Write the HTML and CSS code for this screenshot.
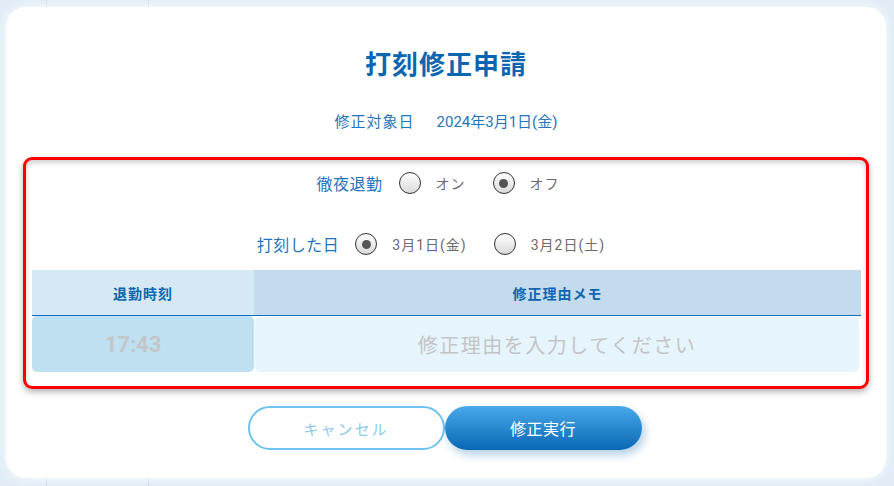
FILE: index.html
```html
<!DOCTYPE html>
<html lang="ja">
<head>
    <meta charset="UTF-8">
    <meta name="viewport" content="width=device-width, initial-scale=1.0">
    <title>打刻修正申請</title>
    <link rel="stylesheet" href="styles.css">
</head>
<body>
    <div class="modal">
        <h1 class="title">打刻修正申請</h1>
        <div class="target">
            <span class="target-label">修正対象日</span>
            <span class="target-date">2024年3月1日(金)</span>
        </div>

        <div class="edit-box">
            <div class="field-row row-night">
                <span class="field-label">徹夜退勤</span>
                <label class="option">
                    <span class="radio"></span>
                    <span class="option-text">オン</span>
                </label>
                <label class="option">
                    <span class="radio checked"></span>
                    <span class="option-text">オフ</span>
                </label>
            </div>
            <div class="field-row row-day">
                <span class="field-label">打刻した日</span>
                <label class="option">
                    <span class="radio checked"></span>
                    <span class="option-text">3月1日(金)</span>
                </label>
                <label class="option">
                    <span class="radio"></span>
                    <span class="option-text">3月2日(土)</span>
                </label>
            </div>

            <div class="edit-table">
                <div class="th th-time">退勤時刻</div>
                <div class="th th-memo">修正理由メモ</div>
                <div class="td td-time">17:43</div>
                <div class="td td-memo">修正理由を入力してください</div>
            </div>
        </div>

        <div class="actions">
            <button class="btn btn-cancel">キャンセル</button>
            <button class="btn btn-submit">修正実行</button>
        </div>
    </div>
</body>
</html>
```

FILE: styles.css
```css
body {
    margin: 0;
    height: 486px;
    padding: 7px 8px 0 6px;
    box-sizing: border-box;
    overflow: hidden;
    font-family: Roboto, "Noto Sans CJK JP", sans-serif;
    background-color: #e1ecf6;
    background-image: linear-gradient(90deg, transparent 46px, #c7dcef 46px, #c7dcef 47px, transparent 47px, transparent 148px, #c7dcef 148px, #c7dcef 149px, transparent 149px);
}
.modal {
    width: 880px;
    height: 471px;
    box-sizing: border-box;
    padding: 40px 17px 0;
    background: #ffffff;
    border-radius: 20px;
    box-shadow: 0 0 12px rgba(255, 255, 255, 0.9);
}
.title {
    margin: 0;
    text-align: center;
    font-size: 26px;
    line-height: 36px;
    letter-spacing: 1px;
    font-weight: bold;
    color: #0b66b0;
}
.target {
    margin-top: 28px;
    display: flex;
    justify-content: center;
    gap: 22px;
    font-size: 15px;
    line-height: 22px;
    color: #1f74bb;
}
.target-label {
    letter-spacing: 1px;
}
.edit-box {
    margin-top: 24px;
    border: 3px solid #ff0000;
    border-radius: 9px;
    padding: 8px 5px 14px 6px;
    box-shadow: 0 3px 6px rgba(0, 0, 0, 0.3), inset 0 3px 5px rgba(0, 0, 0, 0.18);
}
.field-row {
    display: flex;
    justify-content: center;
    align-items: center;
    height: 30px;
}
.row-night {
    padding-right: 17px;
}
.row-day {
    margin-top: 31px;
    margin-bottom: 11px;
    padding-right: 31px;
}
.field-label {
    font-size: 16px;
    letter-spacing: 0.5px;
    color: #1f74bb;
    margin-right: 16px;
}
.option {
    display: flex;
    align-items: center;
    margin-right: 27px;
}
.option:last-child {
    margin-right: 0;
}
.option-text {
    font-size: 14px;
    letter-spacing: 1px;
    color: #6b6b6b;
}
.radio {
    width: 22px;
    height: 22px;
    box-sizing: border-box;
    border: 1.5px solid #333333;
    border-radius: 50%;
    background: linear-gradient(#ffffff, #d9d9d9);
    margin-right: 15px;
    display: flex;
    align-items: center;
    justify-content: center;
}
.radio.checked::after {
    content: "";
    width: 9px;
    height: 9px;
    border-radius: 50%;
    background: #555555;
}
.edit-table {
    display: grid;
    grid-template-columns: 222px 1fr;
    grid-template-rows: 46px 56px;
}
.th {
    display: flex;
    align-items: center;
    justify-content: center;
    font-size: 14px;
    font-weight: bold;
    letter-spacing: 1px;
    color: #0b66b0;
    border-bottom: 1px solid #0a6fbf;
}
.th-time {
    background: #d6e8f4;
}
.th-memo {
    background: #c4dbee;
}
.td {
    display: flex;
    align-items: center;
    justify-content: center;
    border-radius: 5px;
}
.td-time {
    padding-right: 20px;
    background: #bfe0f1;
    font-size: 22px;
    font-weight: bold;
    color: #c2c6c9;
}
.td-memo {
    margin: 1px 2px 0 1px;
    background: #e6f5fd;
    font-size: 20px;
    letter-spacing: 1.5px;
    color: #c4c4c4;
}
.actions {
    margin-top: 17px;
    display: flex;
    justify-content: center;
    padding-right: 3px;
}
.btn {
    width: 197px;
    height: 44px;
    border-radius: 22px;
    font-family: Roboto, "Noto Sans CJK JP", sans-serif;
    cursor: pointer;
}
.btn-cancel {
    background: #ffffff;
    border: 2px solid #6cc4ee;
    color: #8ccaeb;
    font-size: 15px;
    letter-spacing: 2px;
}
.btn-submit {
    border: none;
    background: linear-gradient(#4aa9ea, #0a67b4);
    color: #ffffff;
    font-size: 16px;
    letter-spacing: 0.5px;
    box-shadow: 3px 5px 8px rgba(10, 103, 180, 0.3);
}
```
